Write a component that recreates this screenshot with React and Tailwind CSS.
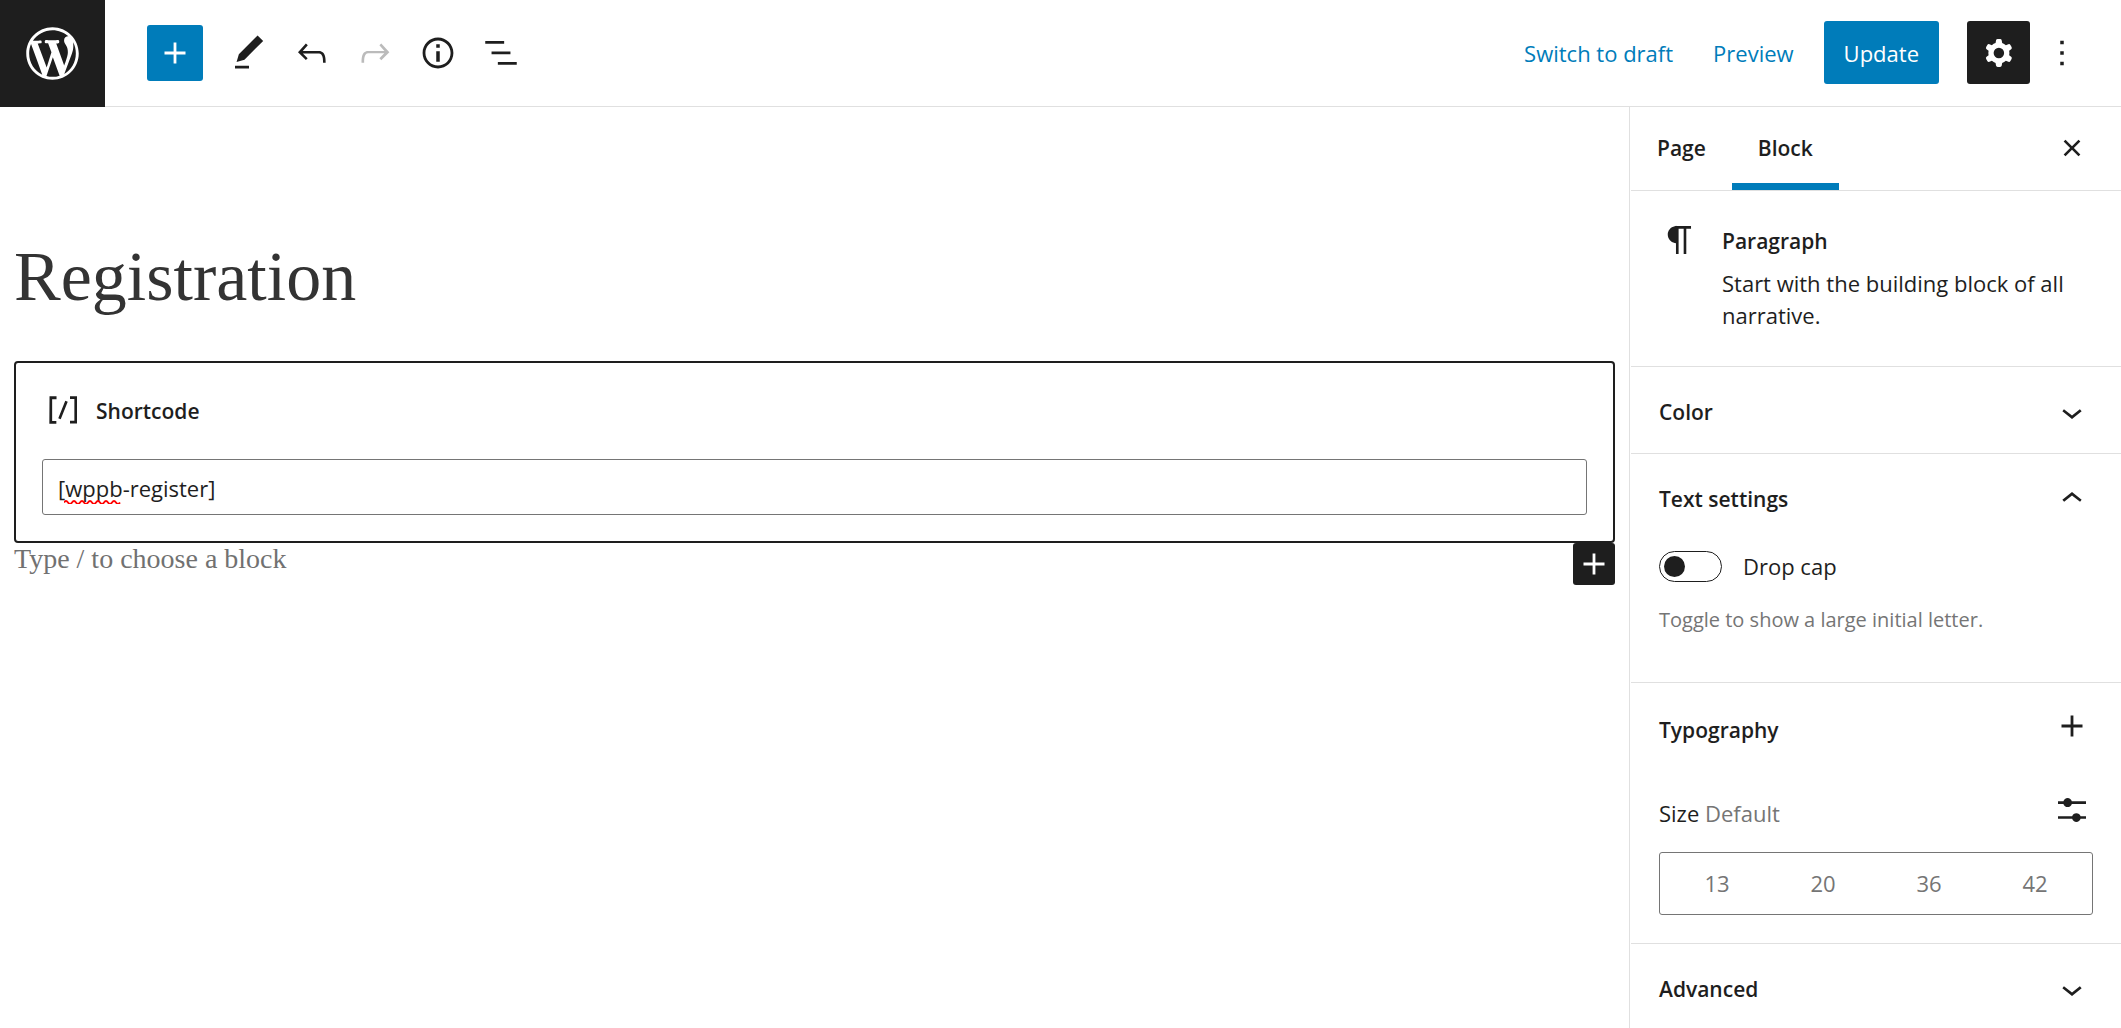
import { useState } from "react";

const paths = {
  plus: "M18 11.2h-5.2V6h-1.6v5.2H6v1.6h5.2V18h1.6v-5.2H18z",
  edit: "M20.1 5.1L16.9 2 6.2 12.7l-1.3 4.4 4.5-1.3L20.1 5.1zM4 20.8h8v-1.5H4v1.5z",
  undo: "M18.3 11.7c-.6-.6-1.4-.9-2.3-.9H6.7l2.9-3.3-1.1-1-4.5 5L8.5 16l1-1-2.7-2.7H16c.5 0 .9.2 1.3.5 1 1 1 3.4 1 4.5v.3h1.5v-.2c0-1.5 0-4.3-1.5-5.7z",
  redo: "M15.6 6.5l-1.1 1 2.9 3.3H8c-.9 0-1.7.3-2.3.9-1.4 1.5-1.4 4.2-1.4 5.6v.2h1.5v-.3c0-1.1 0-3.5 1-4.5.3-.3.7-.5 1.3-.5h9.2L14.5 15l1.1 1.1 4.6-4.6-4.6-5z",
  info: "M12 3.2c-4.8 0-8.8 3.9-8.8 8.8 0 4.8 3.9 8.8 8.8 8.8 4.8 0 8.8-3.9 8.8-8.8 0-4.8-4-8.8-8.8-8.8zm0 16c-4 0-7.2-3.3-7.2-7.2C4.8 8 8 4.8 12 4.8s7.2 3.3 7.2 7.2c0 4-3.2 7.2-7.2 7.2zM11 17h2v-6h-2v6zm0-8h2V7h-2v2z",
  list: "M13.8 5.2H3v1.5h10.8V5.2zm-3.6 12v1.5H21v-1.5H10.2zm7.2-6H6.6v1.5h10.8v-1.5z",
  cog: "M10.289 4.836A1 1 0 0111.275 4h1.306a1 1 0 01.987.836l.244 1.466c.787.26 1.503.679 2.108 1.218l1.393-.522a1 1 0 011.216.437l.653 1.13a1 1 0 01-.23 1.273l-1.148.944a6.025 6.025 0 010 2.435l1.149.946a1 1 0 01.23 1.272l-.653 1.13a1 1 0 01-1.216.437l-1.394-.522c-.605.54-1.32.958-2.108 1.218l-.244 1.466a1 1 0 01-.987.836h-1.306a1 1 0 01-.986-.836l-.244-1.466a5.995 5.995 0 01-2.108-1.218l-1.394.522a1 1 0 01-1.217-.436l-.653-1.131a1 1 0 01.23-1.272l1.149-.946a6.026 6.026 0 010-2.435l-1.148-.944a1 1 0 01-.23-1.272l.653-1.131a1 1 0 011.217-.437l1.393.522a5.994 5.994 0 012.108-1.218l.244-1.466zM14.929 12a3 3 0 11-6 0 3 3 0 016 0z",
  more: "M13 19h-2v-2h2v2zm0-6h-2v-2h2v2zm0-6h-2V5h2v2z",
  close: "M12 13.06l3.712 3.713 1.061-1.06L13.061 12l3.712-3.712-1.06-1.06L12 10.938 8.288 7.227l-1.061 1.06L10.939 12l-3.712 3.712 1.06 1.061L12 13.061z",
  down: "M17.5 11.6L12 16l-5.5-4.4.9-1.2L12 14l4.5-3.6 1 1.2z",
  up: "M6.5 12.4L12 8l5.5 4.4-.9 1.2L12 10l-4.5 3.6-1-1.2z",
  shortcode: "M16 4.2v1.5h2.5v12.5H16v1.5h4V4.2h-4zM4.2 19.8h4v-1.5H5.8V5.8h2.5V4.2h-4l-.1 15.6zm5.1-3.1l1.4.6 4-10-1.4-.6-4 10z",
  paragraph: "M18.3 4H9.9v-.1l-.9.2c-2.3.4-4 2.4-4 4.8s1.7 4.4 4 4.8l.7.1V20h1.5V5.5h2.9V20h1.5V5.5h2.7V4z",
  sliders: "M14.5 13.8c-1.1 0-2.1.7-2.4 1.8H4V17h8.1c.3 1 1.3 1.8 2.4 1.8s2.1-.7 2.4-1.8H20v-1.5h-3.1c-.3-1-1.3-1.7-2.4-1.7zM11.9 7c-.3-1-1.3-1.8-2.4-1.8S7.4 6 7.1 7H4v1.5h3.1c.3 1 1.3 1.8 2.4 1.8s2.1-.7 2.4-1.8H20V7h-8.1z",
};

function Icon({ name }) {
  return (
    <svg viewBox="0 0 24 24" className="size-[42px] shrink-0 fill-current" fillRule="evenodd" aria-hidden="true">
      <path d={paths[name]} />
    </svg>
  );
}

function WordPressLogo() {
  return (
    <svg viewBox="-2 -2 24 24" className="size-[63px] fill-current" aria-hidden="true">
      <path d="M20 10c0-5.51-4.49-10-10-10C4.48 0 0 4.49 0 10c0 5.52 4.48 10 10 10 5.51 0 10-4.48 10-10zM7.78 15.37L4.37 6.22c.55-.02 1.17-.08 1.17-.08.5-.06.44-1.13-.06-1.11 0 0-1.45.11-2.37.11-.18 0-.37 0-.58-.01C4.12 2.69 6.87 1.11 10 1.11c2.33 0 4.45.87 6.05 2.34-.68-.11-1.65.39-1.65 1.58 0 .74.45 1.36.9 2.1.35.61.55 1.36.55 2.46 0 1.49-1.4 5-1.4 5l-3.03-8.37c.54-.02.82-.17.82-.17.5-.05.44-1.25-.06-1.22 0 0-1.44.12-2.38.12-.87 0-2.33-.12-2.33-.12-.5-.03-.56 1.2-.06 1.22l.92.08 1.26 3.41zM17.41 10c.24-.64.74-1.87.43-4.25.7 1.29 1.05 2.71 1.05 4.25 0 3.29-1.73 6.24-4.4 7.78.97-2.59 1.94-5.2 2.92-7.78zM6.1 18.09C3.12 16.65 1.11 13.53 1.11 10c0-1.3.23-2.48.72-3.59C3.25 10.3 4.67 14.2 6.1 18.09zm4.03-6.63l2.58 6.98c-.86.29-1.76.45-2.71.45-.79 0-1.57-.11-2.29-.33.81-2.38 1.62-4.74 2.42-7.1z" />
    </svg>
  );
}

function ToolButton({ icon, label, disabled }) {
  return (
    <button
      type="button"
      aria-label={label}
      disabled={disabled}
      className="flex size-[63px] items-center justify-center disabled:text-[#bbbbbb]"
    >
      <Icon name={icon} />
    </button>
  );
}

function PanelToggle({ title, open }) {
  return (
    <h2>
      <button type="button" aria-expanded={open} className="flex w-full items-center justify-between px-7 pt-6 pb-5 text-left text-[21px] font-semibold">
        {title}
        <Icon name={open ? "up" : "down"} />
      </button>
    </h2>
  );
}

function Header() {
  return (
    <header className="flex items-stretch border-b border-[#e0e0e0]">
      <a href="#pages" aria-label="View Pages" className="-mb-px flex h-[107px] w-[105px] shrink-0 items-center justify-center bg-[#1e1e1e] text-white">
        <WordPressLogo />
      </a>
      <div className="flex flex-1 items-center justify-between pr-[38px] pb-px pl-[42px]">
        <div className="flex items-center">
          <button type="button" aria-label="Add block" className="mr-[14px] flex size-14 items-center justify-center rounded-[3px] bg-[#007cba] text-white">
            <Icon name="plus" />
          </button>
          <ToolButton icon="edit" label="Tools" />
          <ToolButton icon="undo" label="Undo" />
          <ToolButton icon="redo" label="Redo" disabled />
          <ToolButton icon="info" label="Details" />
          <ToolButton icon="list" label="List View" />
        </div>
        <div className="flex items-center">
          <button type="button" className="px-5 text-[#007cba]">Switch to draft</button>
          <button type="button" className="px-5 text-[#007cba]">Preview</button>
          <button type="button" className="ml-[10px] h-[63px] rounded-[3px] bg-[#007cba] px-5 text-white">Update</button>
          <button type="button" aria-label="Settings" aria-pressed="true" className="ml-7 flex size-[63px] items-center justify-center rounded-[3px] bg-[#1e1e1e] text-white">
            <Icon name="cog" />
          </button>
          <button type="button" aria-label="Options" className="ml-[11px]">
            <Icon name="more" />
          </button>
        </div>
      </div>
    </header>
  );
}

function Editor() {
  const [code, setCode] = useState("[wppb-register]");
  return (
    <main className="min-w-0 flex-1 px-[14px] pt-[130px]">
      <h1 className="font-['Liberation_Serif',serif] text-[70px] leading-[80px] text-[#333333]">Registration</h1>
      <section className="mt-11 rounded-[4px] border-2 border-[#1e1e1e] p-[26px]">
        <label htmlFor="shortcode" className="flex items-center gap-3 text-[21px] font-semibold">
          <Icon name="shortcode" />
          <span className="pt-0.5">Shortcode</span>
        </label>
        <div className="relative mt-7">
          <input
            id="shortcode"
            value={code}
            onChange={(e) => setCode(e.target.value)}
            spellCheck="false"
            className="block h-14 w-full rounded-[3px] border border-[#757575] px-[15px] pt-0.5"
          />
          <svg viewBox="0 0 57 5" className="pointer-events-none absolute top-10 left-[22px] h-[5px] w-[57px] fill-none stroke-[#ff0000]" strokeWidth="1.8" aria-hidden="true">
            <path d="M0 3.5q2-3 4 0t4 0t4 0t4 0t4 0t4 0t4 0t4 0t4 0t4 0t4 0t4 0t4 0t4 0" />
          </svg>
        </div>
      </section>
      <div className="flex items-start justify-between">
        <p className="font-['Liberation_Serif',serif] text-[28px] leading-8 text-[#717171]">Type / to choose a block</p>
        <button type="button" aria-label="Add block" className="flex size-[42px] items-center justify-center rounded-[3px] bg-[#1e1e1e] text-white">
          <Icon name="plus" />
        </button>
      </div>
    </main>
  );
}

function Sidebar() {
  const [dropCap, setDropCap] = useState(false);
  const [size, setSize] = useState("");
  return (
    <aside className="w-[492px] shrink-0 border-l border-[#e0e0e0] pl-px">
      <div className="flex h-[84px] items-stretch justify-between border-b border-[#e0e0e0] pr-7">
        <div role="tablist" className="flex text-[21px]">
          <button type="button" role="tab" aria-selected="false" className="px-[26px] pb-0.5 font-semibold">Page</button>
          <button type="button" role="tab" aria-selected="true" className="px-[26px] pb-0.5 font-semibold shadow-[inset_0_-7px_0_0_#007cba]">Block</button>
        </div>
        <button type="button" aria-label="Close settings" className="pb-0.5">
          <Icon name="close" />
        </button>
      </div>

      <section className="flex h-[176px] items-start gap-[21px] border-b border-[#e0e0e0] px-7 pt-7">
        <Icon name="paragraph" />
        <div className="pt-1">
          <h2 className="text-[21px] leading-9 font-semibold">Paragraph</h2>
          <p className="mt-2 leading-8">Start with the building block of all narrative.</p>
        </div>
      </section>

      <section className="border-b border-[#e0e0e0]">
        <PanelToggle title="Color" open={false} />
      </section>

      <section className="border-b border-[#e0e0e0] pb-[46px]">
        <PanelToggle title="Text settings" open />
        <div className="px-7 pt-2.5">
          <label className="flex items-center gap-[21px]">
            <input
              type="checkbox"
              role="switch"
              checked={dropCap}
              onChange={(e) => setDropCap(e.target.checked)}
              className="h-[31px] w-[63px] shrink-0 appearance-none rounded-full border border-[#1e1e1e] p-1 before:block before:size-[21px] before:rounded-full before:bg-[#1e1e1e] checked:before:ml-auto"
            />
            Drop cap
          </label>
          <p className="mt-[22px] text-[20px] leading-8 text-[#757575]">Toggle to show a large initial letter.</p>
        </div>
      </section>

      <section className="border-b border-[#e0e0e0] px-7 pt-[22px] pb-7">
        <div className="flex items-center justify-between">
          <h2 className="pt-2 text-[21px] font-semibold">Typography</h2>
          <button type="button" aria-label="Typography options">
            <Icon name="plus" />
          </button>
        </div>
        <div className="mt-[42px] flex items-center justify-between">
          <h3 className="pt-1.5">
            Size <span className="text-[#757575]">Default</span>
          </h3>
          <button type="button" aria-label="Set custom size">
            <Icon name="sliders" />
          </button>
        </div>
        <div role="radiogroup" aria-label="Font size" className="mt-[21px] flex h-[63px] items-stretch rounded-[3px] border border-[#757575] px-1 pb-0.5 text-[#757575]">
          {["13", "20", "36", "42"].map((n) => (
            <button key={n} type="button" role="radio" aria-checked={size === n} onClick={() => setSize(n)} className="flex-1">
              {n}
            </button>
          ))}
        </div>
      </section>

      <section>
        <PanelToggle title="Advanced" open={false} />
      </section>
    </aside>
  );
}

export default function App() {
  return (
    <div className="flex h-screen flex-col overflow-hidden bg-white font-['Open_Sans',sans-serif] text-[22px] leading-8 text-[#1e1e1e]">
      <Header />
      <div className="flex min-h-0 flex-1">
        <Editor />
        <Sidebar />
      </div>
    </div>
  );
}
